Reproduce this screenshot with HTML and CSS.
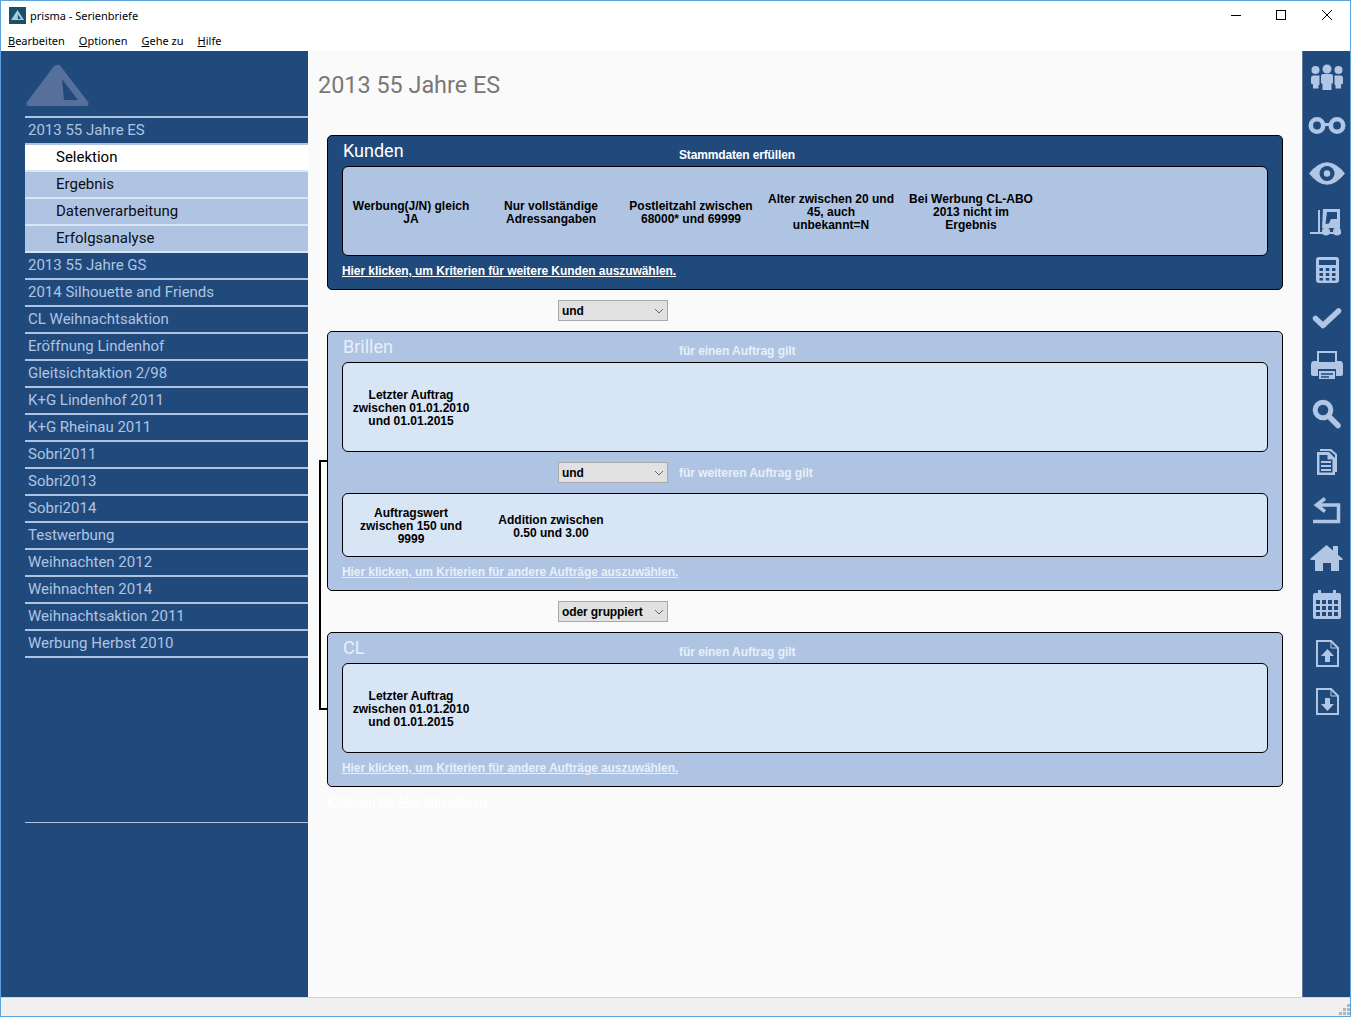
FILE: index.html
```html
<!DOCTYPE html>
<html lang="de">
<head>
<meta charset="utf-8">
<title>prisma - Serienbriefe</title>
<link rel="stylesheet" href="styles.css">
</head>
<body>
<div class="window">
  <header class="titlebar">
    <svg class="app-icon" width="17" height="17" viewBox="0 0 17 17"><rect width="17" height="17" fill="#17506b"/><path d="M8.500 3 15 13H2z" fill="#a9cbd6"/><path d="M8.600 7.200 9 12h3z" fill="#17506b"/></svg>
    <span class="app-title">prisma - Serienbriefe</span>
    <div class="controls">
      <svg width="46" height="29" viewBox="0 0 46 29"><path d="M19 14.500h10" stroke="#000" fill="none"/></svg>
      <svg width="46" height="29" viewBox="0 0 46 29"><rect x="18.500" y="9.500" width="9" height="9" stroke="#000" fill="none"/></svg>
      <svg width="46" height="29" viewBox="0 0 46 29"><path d="M18 9l10 10M28 9 18 19" stroke="#000" fill="none"/></svg>
    </div>
  </header>
  <nav class="menubar">
    <span><u>B</u>earbeiten</span><span><u>O</u>ptionen</span><span><u>G</u>ehe zu</span><span><u>H</u>ilfe</span>
  </nav>
  <div class="main">
    <aside class="sidebar">
      <svg class="logo" width="64" height="43" viewBox="0 0 64 43"><path d="M31 1 Q32.500 0 34.500 2 L62 38 Q64 42 60 42 H3 Q-1 42 1 38 L28 2 Z" fill="#576f9b"/><path d="M36 15 L52 36 H38 Z" fill="#214a7c"/></svg>
      <ul class="tree">
        <li class="top">2013 55 Jahre ES</li>
        <li class="sub active">Selektion</li>
        <li class="sub">Ergebnis</li>
        <li class="sub">Datenverarbeitung</li>
        <li class="sub">Erfolgsanalyse</li>
        <li class="top">2013 55 Jahre GS</li>
        <li class="top">2014 Silhouette and Friends</li>
        <li class="top">CL Weihnachtsaktion</li>
        <li class="top">Eröffnung Lindenhof</li>
        <li class="top">Gleitsichtaktion 2/98</li>
        <li class="top">K+G Lindenhof 2011</li>
        <li class="top">K+G Rheinau 2011</li>
        <li class="top">Sobri2011</li>
        <li class="top">Sobri2013</li>
        <li class="top">Sobri2014</li>
        <li class="top">Testwerbung</li>
        <li class="top">Weihnachten 2012</li>
        <li class="top">Weihnachten 2014</li>
        <li class="top">Weihnachtsaktion 2011</li>
        <li class="top">Werbung Herbst 2010</li>
      </ul>
      <div class="side-end"></div>
    </aside>

    <main class="content">
      <div class="bracket"></div>
      <h1 class="page-title">2013 55 Jahre ES</h1>

      <section class="card dark">
        <div class="card-head"><h2>Kunden</h2><span class="hint strong">Stammdaten erfüllen</span></div>
        <div class="box">
          <div class="crit-row">
            <div class="crit two">Werbung(J/N) gleich<br>JA</div>
            <div class="crit two">Nur vollständige<br>Adressangaben</div>
            <div class="crit two">Postleitzahl zwischen<br>68000* und 69999</div>
            <div class="crit">Alter zwischen 20 und<br>45, auch<br>unbekannt=N</div>
            <div class="crit">Bei Werbung CL-ABO<br>2013 nicht im<br>Ergebnis</div>
          </div>
        </div>
        <a class="more">Hier klicken, um Kriterien für weitere Kunden auszuwählen.</a>
      </section>

      <div class="joiner">
        <div class="sel"><select><option>und</option></select><svg width="10" height="6" viewBox="0 0 10 6"><path d="M1 1l4 4 4-4" fill="none" stroke="#666"/></svg></div>
      </div>

      <section class="card light">
        <div class="card-head"><h2>Brillen</h2><span class="hint">für einen Auftrag gilt</span></div>
        <div class="box">
          <div class="crit-row">
            <div class="crit">Letzter Auftrag<br>zwischen 01.01.2010<br>und 01.01.2015</div>
          </div>
        </div>
        <div class="inner-joiner">
          <div class="sel"><select><option>und</option></select><svg width="10" height="6" viewBox="0 0 10 6"><path d="M1 1l4 4 4-4" fill="none" stroke="#666"/></svg></div>
          <span class="hint">für weiteren Auftrag gilt</span>
        </div>
        <div class="box short">
          <div class="crit-row">
            <div class="crit">Auftragswert<br>zwischen 150 und<br>9999</div>
            <div class="crit two">Addition zwischen<br>0.50 und 3.00</div>
          </div>
        </div>
        <a class="more">Hier klicken, um Kriterien für andere Aufträge auszuwählen.</a>
      </section>

      <div class="joiner">
        <div class="sel"><select><option>oder gruppiert</option></select><svg width="10" height="6" viewBox="0 0 10 6"><path d="M1 1l4 4 4-4" fill="none" stroke="#666"/></svg></div>
      </div>

      <section class="card light">
        <div class="card-head"><h2>CL</h2><span class="hint">für einen Auftrag gilt</span></div>
        <div class="box">
          <div class="crit-row">
            <div class="crit">Letzter Auftrag<br>zwischen 01.01.2010<br>und 01.01.2015</div>
          </div>
        </div>
        <a class="more">Hier klicken, um Kriterien für andere Aufträge auszuwählen.</a>
      </section>

      <a class="ghost">Kriterien für Abo hinzufügen.</a>
    </main>

    <aside class="toolbar">
      <svg class="tool" viewBox="0 0 48 48"><circle cx="24" cy="16" r="4.500"/><path d="M18 23q0-2 2-2h8q2 0 2 2v7l-1.500 1v6h-9v-6L18 30z"/><circle cx="12.500" cy="17" r="4"/><path d="M8 25q0-2.500 2-2.500h6.500v9l-1 1v3H10v-4l-2-1z"/><circle cx="35.500" cy="17" r="4"/><path d="M40 25q0-2.500-2-2.500h-6.500v9l1 1v3H38v-4l2-1z"/></svg>
      <svg class="tool" viewBox="0 0 48 48"><circle cx="14" cy="24.500" r="6.200" class="ln" stroke-width="4.600"/><circle cx="34" cy="24.500" r="6.200" class="ln" stroke-width="4.600"/><path d="M21 23.500h6" class="ln" stroke-width="3"/></svg>
      <svg class="tool" viewBox="0 0 48 48"><path d="M6 24.500Q24 2 42 24.500 24 47 6 24.500z"/><circle cx="24" cy="24.500" r="7.500" class="cut"/><circle cx="24" cy="24.500" r="3.200"/></svg>
      <svg class="tool" viewBox="0 0 48 48"><rect x="7" y="35" width="31" height="2"/><rect x="15" y="13" width="2" height="23"/><path d="M20 12H37V31H19zM24 15 22.500 27 26 26.500 28 22H34V15z" fill-rule="evenodd"/><circle cx="23" cy="34.500" r="4"/><circle cx="34" cy="34.500" r="4"/></svg>
      <svg class="tool" viewBox="0 0 48 48"><rect x="13" y="12" width="23" height="26" rx="3"/><rect x="16" y="15" width="17" height="5" class="cut"/><g class="cut"><rect x="16.500" y="23" width="3.500" height="3"/><rect x="22.800" y="23" width="3.500" height="3"/><rect x="29" y="23" width="3.500" height="3"/><rect x="16.500" y="28" width="3.500" height="3"/><rect x="22.800" y="28" width="3.500" height="3"/><rect x="29" y="28" width="3.500" height="3"/><rect x="16.500" y="33" width="3.500" height="2.500"/><rect x="22.800" y="33" width="3.500" height="2.500"/><rect x="29" y="33" width="3.500" height="2.500"/></g></svg>
      <svg class="tool" viewBox="0 0 48 48"><path d="M12.500 25.500 20 32.500 35.500 18" class="ln" stroke-width="5.500" stroke-linecap="round" stroke-linejoin="round"/></svg>
      <svg class="tool" viewBox="0 0 48 48"><rect x="15" y="11" width="18" height="14" class="ln" stroke-width="2"/><path d="M11 20h26q3 0 3 4v9q0 2-2 2H10q-2 0-2-2v-9q0-4 3-4z"/><rect x="15" y="28" width="18" height="10" class="cut"/><rect x="16" y="30" width="16" height="8"/><path d="M18 33h12M18 36h8" class="cut-ln"/><rect x="16" y="12" width="16" height="9" class="cut"/></svg>
      <svg class="tool" viewBox="0 0 48 48"><circle cx="20" cy="21" r="7.800" class="ln" stroke-width="5"/><path d="M26 27.500 35 36.500" class="ln" stroke-width="5.500" stroke-linecap="round"/></svg>
      <svg class="tool" viewBox="0 0 48 48"><path d="M17 12h11l6 5v18h-2V18l-5-4H17z"/><path d="M14 15h12l6 6v17H14zM16.500 18v17.500h13V22.500h-5V18z" fill-rule="evenodd"/><path d="M18 24h10v2H18zM18 28h10v2H18zM18 32h10v2H18z"/></svg>
      <svg class="tool" viewBox="0 0 48 48"><path d="M22 13.500 13.500 20l8.500 6.500" class="ln" stroke-width="3.500"/><path d="M14 20h21.500v16.500H10" class="ln" stroke-width="3.500"/></svg>
      <svg class="tool" viewBox="0 0 48 48"><path d="M7 26 23.500 12 30 17.500V13h5v9l5 4-1 1H8z"/><path d="M12 26.500h24V38h-8v-8h-8v8h-8z"/></svg>
      <svg class="tool" viewBox="0 0 48 48"><rect x="10" y="12" width="28" height="26" rx="2"/><rect x="15" y="9" width="3" height="6"/><rect x="30" y="9" width="3" height="6"/><g class="cut"><rect x="13" y="19" width="4" height="4"/><rect x="19" y="19" width="4" height="4"/><rect x="25" y="19" width="4" height="4"/><rect x="31" y="19" width="4" height="4"/><rect x="13" y="25" width="4" height="4"/><rect x="19" y="25" width="4" height="4"/><rect x="25" y="25" width="4" height="4"/><rect x="31" y="25" width="4" height="4"/><rect x="13" y="31" width="4" height="4"/><rect x="19" y="31" width="4" height="4"/><rect x="25" y="31" width="4" height="4"/><rect x="31" y="31" width="4" height="4"/></g></svg>
      <svg class="tool" viewBox="0 0 48 48"><path d="M14 12h14l7 7v18H14z" class="ln" stroke-width="2"/><path d="M28 12v7h7" class="ln" stroke-width="1"/><path d="M24.500 20 31 27h-4v6h-5v-6h-4z"/></svg>
      <svg class="tool" viewBox="0 0 48 48"><path d="M14 12h14l7 7v18H14z" class="ln" stroke-width="2"/><path d="M28 12v7h7" class="ln" stroke-width="1"/><path d="M24.500 34 31 27h-4v-6h-5v6h-4z"/></svg>
    </aside>
  </div>
  <footer class="statusbar">
    <svg width="12" height="12" viewBox="0 0 12 12"><path d="M9 0h3v3H9zM5 4h3v3H5zM9 4h3v3H9zM1 8h3v3H1zM5 8h3v3H5zM9 8h3v3H9z" fill="#b5b5b5"/></svg>
  </footer>
</div>
</body>
</html>
```

FILE: styles.css
```css
* { box-sizing: border-box; }
html, body { margin: 0; padding: 0; }
body { background: #fff; overflow: hidden; }

.window {
  width: 1351px;
  height: 1017px;
  border: 1px solid #5ba2dc;
  display: flex;
  flex-direction: column;
  background: #fff;
}

.titlebar {
  height: 29px;
  flex: none;
  display: flex;
  align-items: center;
  padding-left: 8px;
}
.app-icon { flex: none; }
.app-title { margin-left: 4px; font: 11px "Noto Sans", sans-serif; color: #000; }
.controls { margin-left: auto; display: flex; }
.controls svg { display: block; }

.menubar {
  height: 21px;
  flex: none;
  display: flex;
  align-items: center;
  padding-left: 7px;
  gap: 14px;
  font: 11px "Noto Sans", sans-serif;
  color: #000;
}

.main { flex: 1; display: flex; min-height: 0; }

.sidebar {
  width: 307px;
  flex: none;
  background: #214a7c;
  padding: 13px 0 0 24px;
}
.logo { display: block; margin-left: 1px; }
.tree {
  list-style: none;
  margin: 9px 0 0;
  padding: 0;
  border-bottom: 2px solid #afc4e3;
  font: 15px Roboto, sans-serif;
}
.tree li {
  height: 27px;
  line-height: 25px;
  border-top: 2px solid #afc4e3;
}
.tree .top { color: #afc4e3; padding-left: 3px; }
.tree .sub { color: #0b0f14; padding-left: 31px; background: #afc4e3; border-top-color: #d8e5f4; }
.tree .active { background: #fff; color: #000; border-top-color: #afc4e3; }
.tree .active + .sub { border-top-color: #d8e5f4; }
.tree .sub + .top { border-top-color: #d8e5f4; }
.side-end { margin-top: 164px; border-top: 1px solid #afc4e3; }

.content {
  flex: 1;
  position: relative;
  background: #fafafa;
  padding: 0 19px;
  min-width: 0;
}
.page-title {
  margin: 19px 0 0 -9px;
  height: 65px;
  font: 400 23.400px/30px Roboto, sans-serif;
  color: #787878;
}
.bracket {
  position: absolute;
  left: 11px;
  top: 409px;
  width: 12px;
  height: 250px;
  border: 2px solid #000;
  border-right: 0;
}

.card {
  position: relative;
  border: 1px solid #000;
  border-radius: 5px;
  padding: 0 14px;
  font: 700 12px/13px "Liberation Sans", sans-serif;
}
.card.dark { background: #214a7c; }
.card.light { background: #afc4e3; }
.card.dark .box { background: #afc4e3; }
.card.light .box { background: #d8e5f4; }

.card-head {
  height: 30px;
  display: flex;
  align-items: center;
}
.card-head h2 {
  margin: 0 0 0 1px;
  width: 336px;
  font: 400 18px/24px Roboto, sans-serif;
  color: #e8eff8;
}
.card.dark .card-head h2 { color: #fff; }
.hint { color: #e8eff8; position: relative; top: 4px; letter-spacing: -0.05px; }
.hint.strong { color: #fff; letter-spacing: -0.15px; }

.box {
  height: 90px;
  border: 1px solid #000;
  border-radius: 6px;
  display: flex;
  align-items: center;
}
.box.short { height: 64px; }
.crit-row { display: flex; align-items: center; margin: 2px 0 0 -2px; }
.crit {
  width: 140px;
  text-align: center;
  color: #000;
  white-space: nowrap;
}
.crit.two { padding-top: 2px; }

.more {
  display: block;
  height: 33px;
  line-height: 30px;
  color: #fff;
  text-decoration: underline;
  letter-spacing: -0.07px;
}
.card.light .more { color: #e8eff8; }

.joiner { height: 41px; padding: 10px 0 0 231px; }
.inner-joiner {
  height: 41px;
  padding: 10px 0 0 216px;
  display: flex;
  align-items: flex-start;
  gap: 11px;
}
.inner-joiner .hint { top: 5px; }

.sel { position: relative; width: 110px; height: 21px; }
.sel select {
  appearance: none;
  width: 110px;
  height: 21px;
  display: block;
  margin: 0;
  padding: 0 3px;
  background: #e1e1e1;
  border: 1px solid #a8a8a8;
  border-radius: 0;
  color: #000;
  font: 700 12px "Liberation Sans", sans-serif;
  letter-spacing: -0.1px;
}
.sel svg { position: absolute; right: 4px; top: 8px; }

.ghost {
  display: block;
  margin-top: 8px;
  color: #fff;
  text-decoration: underline;
  font: 700 12px/14px "Liberation Sans", sans-serif;
  letter-spacing: -0.1px;
}

.toolbar {
  width: 48px;
  flex: none;
  background: #214a7c;
  border-left: 1px solid #5f7a9c;
  padding-top: 2px;
  display: flex;
  flex-direction: column;
  align-items: flex-start;
}
.tool { display: block; width: 48px; height: 48px; flex: none; fill: #b1c5e4; }
.tool .ln { fill: none; stroke: #b1c5e4; }
.tool .cut, .tool .cut rect { fill: #214a7c; }
.tool .cut-ln { fill: none; stroke: #214a7c; stroke-width: 1.500; }

.statusbar {
  height: 19px;
  flex: none;
  background: #f0f0f0;
  border-top: 1px solid #d4d4d4;
  display: flex;
  justify-content: flex-end;
  align-items: flex-end;
}
```
